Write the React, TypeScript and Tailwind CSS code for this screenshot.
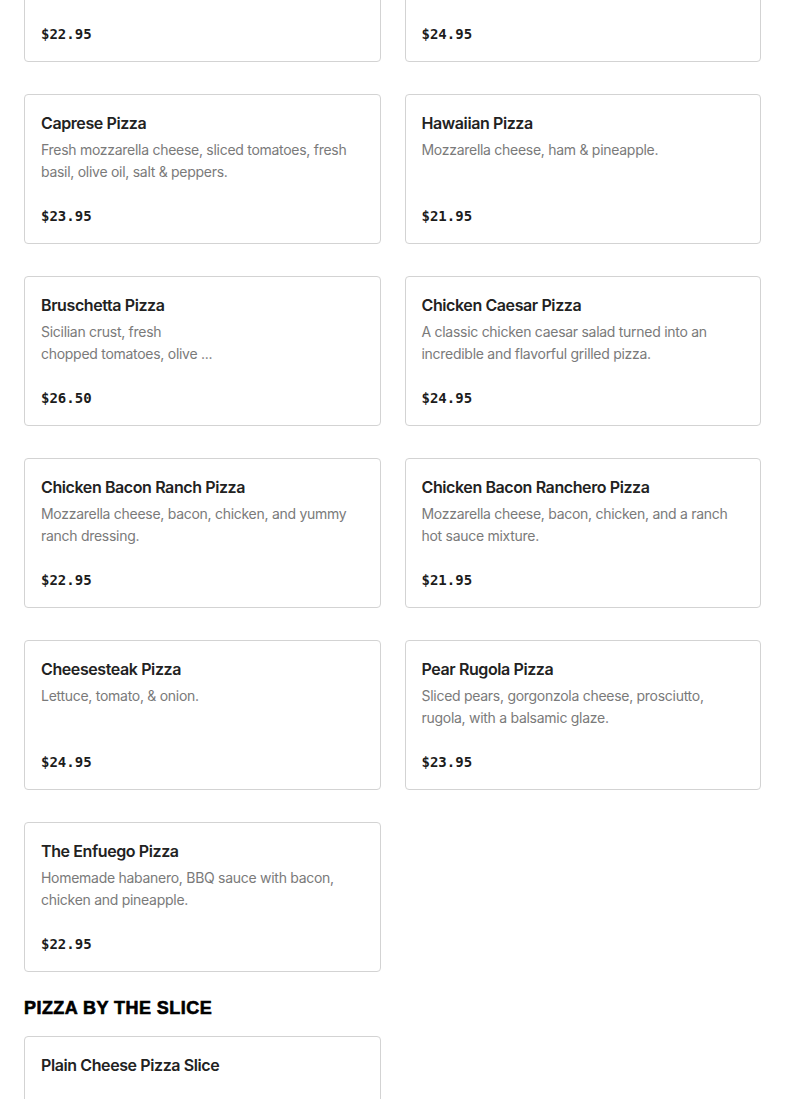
import React from 'react';

type Item = { name: string; desc: string; price: string };

const PIZZAS: Item[] = [
  { name: 'Margherita Pizza', desc: 'Fresh mozzarella, basil and our signature tomato sauce.', price: '$22.95' },
  { name: 'Meat Lovers Pizza', desc: 'Pepperoni, sausage, ham, bacon and ground beef topping.', price: '$24.95' },
  { name: 'Caprese Pizza', desc: 'Fresh mozzarella cheese, sliced tomatoes, fresh basil, olive oil, salt & peppers.', price: '$23.95' },
  { name: 'Hawaiian Pizza', desc: 'Mozzarella cheese, ham & pineapple.', price: '$21.95' },
  { name: 'Bruschetta Pizza', desc: 'Sicilian crust, fresh\nchopped tomatoes, olive ...', price: '$26.50' },
  { name: 'Chicken Caesar Pizza', desc: 'A classic chicken caesar salad turned into an incredible and flavorful grilled pizza.', price: '$24.95' },
  { name: 'Chicken Bacon Ranch Pizza', desc: 'Mozzarella cheese, bacon, chicken, and yummy ranch dressing.', price: '$22.95' },
  { name: 'Chicken Bacon Ranchero Pizza', desc: 'Mozzarella cheese, bacon, chicken, and a ranch hot sauce mixture.', price: '$21.95' },
  { name: 'Cheesesteak Pizza', desc: 'Lettuce, tomato, & onion.', price: '$24.95' },
  { name: 'Pear Rugola Pizza', desc: 'Sliced pears, gorgonzola cheese, prosciutto, rugola, with a balsamic glaze.', price: '$23.95' },
  { name: 'The Enfuego Pizza', desc: 'Homemade habanero, BBQ sauce with bacon, chicken and pineapple.', price: '$22.95' },
];

function Card({ item }: { item: Item }) {
  return (
    <div className="flex h-[150px] flex-col rounded-[4px] border border-[#d3d3d3] bg-white px-4 pt-4 pb-[17px]">
      <div className="font-['Inter',sans-serif] text-[16px] leading-6 font-semibold tracking-[-0.025em] text-[#222]">{item.name}</div>
      <p className="mt-[4px] min-h-[44px] whitespace-pre-line pr-2 font-['Inter',sans-serif] text-[14px] leading-[22px] tracking-[-0.02em] text-[#7a7a7a]">{item.desc}</p>
      <div className="mt-auto font-['DejaVu_Sans_Mono',monospace] text-[14px] leading-5 font-bold text-[#1c1c1c]">{item.price}</div>
    </div>
  );
}

export default function App() {
  return (
    <div className="min-h-screen overflow-hidden bg-white">
      <div className="-mt-[88px] px-6">
        <div className="grid grid-cols-2 gap-x-6 gap-y-8">
          {PIZZAS.map((p) => <Card key={p.name} item={p} />)}
        </div>

        <h2 className="mt-6 mb-4 font-['Liberation_Sans',sans-serif] text-[18px] leading-6 font-black tracking-[0.025em] text-black [-webkit-text-stroke:0.6px_black]">
          PIZZA BY THE SLICE
        </h2>

        <div className="grid grid-cols-2 gap-x-6 gap-y-8">
          <Card item={{ name: 'Plain Cheese Pizza Slice', desc: '', price: '$3.50' }} />
        </div>
      </div>
    </div>
  );
}
